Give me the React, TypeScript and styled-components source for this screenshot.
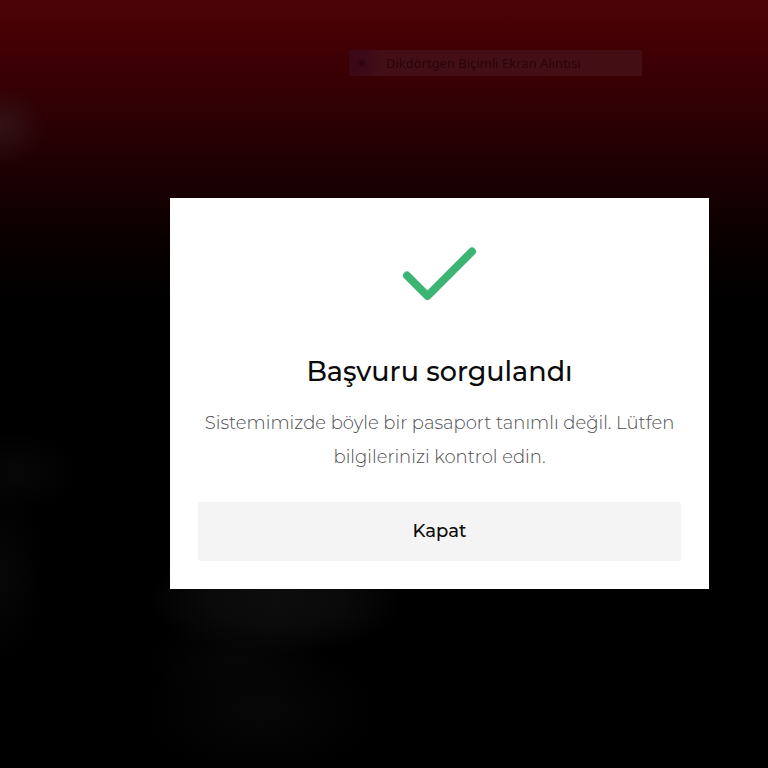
import React from "react";
import styled, { createGlobalStyle } from "styled-components";

const GlobalStyle = createGlobalStyle`
  *, *::before, *::after { box-sizing: border-box; }
  html, body, #root { min-height: 100%; }
  body {
    margin: 0;
    background: #000;
    font-family: Montserrat, Inter, "Open Sans", sans-serif;
  }
`;

const Backdrop = styled.main`
  position: relative;
  min-height: 100vh;
  display: flex;
  align-items: flex-start;
  justify-content: center;
  padding: 198px 59px 28px 170px;
  background:
    radial-gradient(ellipse 46px 40px at 0 126px, rgba(56, 32, 36, 0.55), rgba(56, 32, 36, 0.4) 30%, transparent),
    radial-gradient(ellipse 64px 40px at 16px 472px, #070707, transparent),
    radial-gradient(ellipse 46px 90px at 0 575px, #070707, transparent),
    radial-gradient(ellipse 130px 55px at 275px 600px, #0d0d0d, #0a0a0a 50%, transparent),
    radial-gradient(ellipse 90px 45px at 235px 660px, #060606, transparent),
    radial-gradient(ellipse 120px 70px at 260px 710px, #070708, transparent),
    linear-gradient(#4c0307 0, #430004 40px, #300004 105px, #200003 160px, #100001 215px, #050000 265px, #000 305px);
`;

const CaptureHint = styled.div`
  position: absolute;
  top: 50px;
  left: 349px;
  width: 293px;
  height: 26px;
  display: flex;
  align-items: center;
  gap: 21px;
  padding-left: 10px;
  border-radius: 1px;
  background: linear-gradient(90deg, #3c0818 0, #3c0a17 18px, #430e16 32px, #430e14);
  box-shadow: 0 0 3px #390306;
  color: #24020a;
  font: 13px/26px "Noto Sans", sans-serif;
  white-space: nowrap;
`;

const HintDot = styled.span`
  width: 6px;
  height: 6px;
  border-radius: 50%;
  background: #2b0414;
  filter: blur(1px);
`;

const HintLabel = styled.span`
  opacity: 0.8;
`;

const Dialog = styled.section`
  flex: 1;
  max-width: 560px;
  display: flex;
  flex-direction: column;
  align-items: center;
  padding: 28px;
  background: #fff;
  text-align: center;
`;

const CheckIcon = styled.svg`
  width: 96px;
  height: 96px;
  fill: none;
  stroke: #3cb474;
  stroke-width: 8;
  stroke-linecap: round;
  stroke-linejoin: round;
`;

const Title = styled.h1`
  margin: 32px 0 16px;
  color: #0b0b0b;
  font-size: 27px;
  font-weight: 500;
  line-height: 36px;
`;

const Message = styled.p`
  margin: 0 0 28px;
  color: #4c4c50;
  font-size: 18px;
  font-weight: 300;
  line-height: 34px;
`;

const CloseButton = styled.button`
  width: 100%;
  padding: 12px 16px;
  border: 0;
  border-radius: 2px;
  background: #f4f4f4;
  color: #0b0b0b;
  font: inherit;
  font-size: 18px;
  font-weight: 500;
  line-height: 35px;
  cursor: pointer;
`;

export default function App() {
  return (
    <>
      <GlobalStyle />
      <Backdrop>
        <CaptureHint>
          <HintDot />
          <HintLabel>Dikdörtgen Biçimli Ekran Alıntısı</HintLabel>
        </CaptureHint>
        <Dialog role="dialog" aria-modal="true" aria-labelledby="dialog-title" aria-describedby="dialog-message">
          <CheckIcon viewBox="0 0 96 96" aria-hidden="true">
            <path d="M15 49.5 L35.5 70 L80 25.5" />
          </CheckIcon>
          <Title id="dialog-title">Başvuru sorgulandı</Title>
          <Message id="dialog-message">
            Sistemimizde böyle bir pasaport tanımlı değil. Lütfen bilgilerinizi kontrol edin.
          </Message>
          <CloseButton type="button">Kapat</CloseButton>
        </Dialog>
      </Backdrop>
    </>
  );
}
